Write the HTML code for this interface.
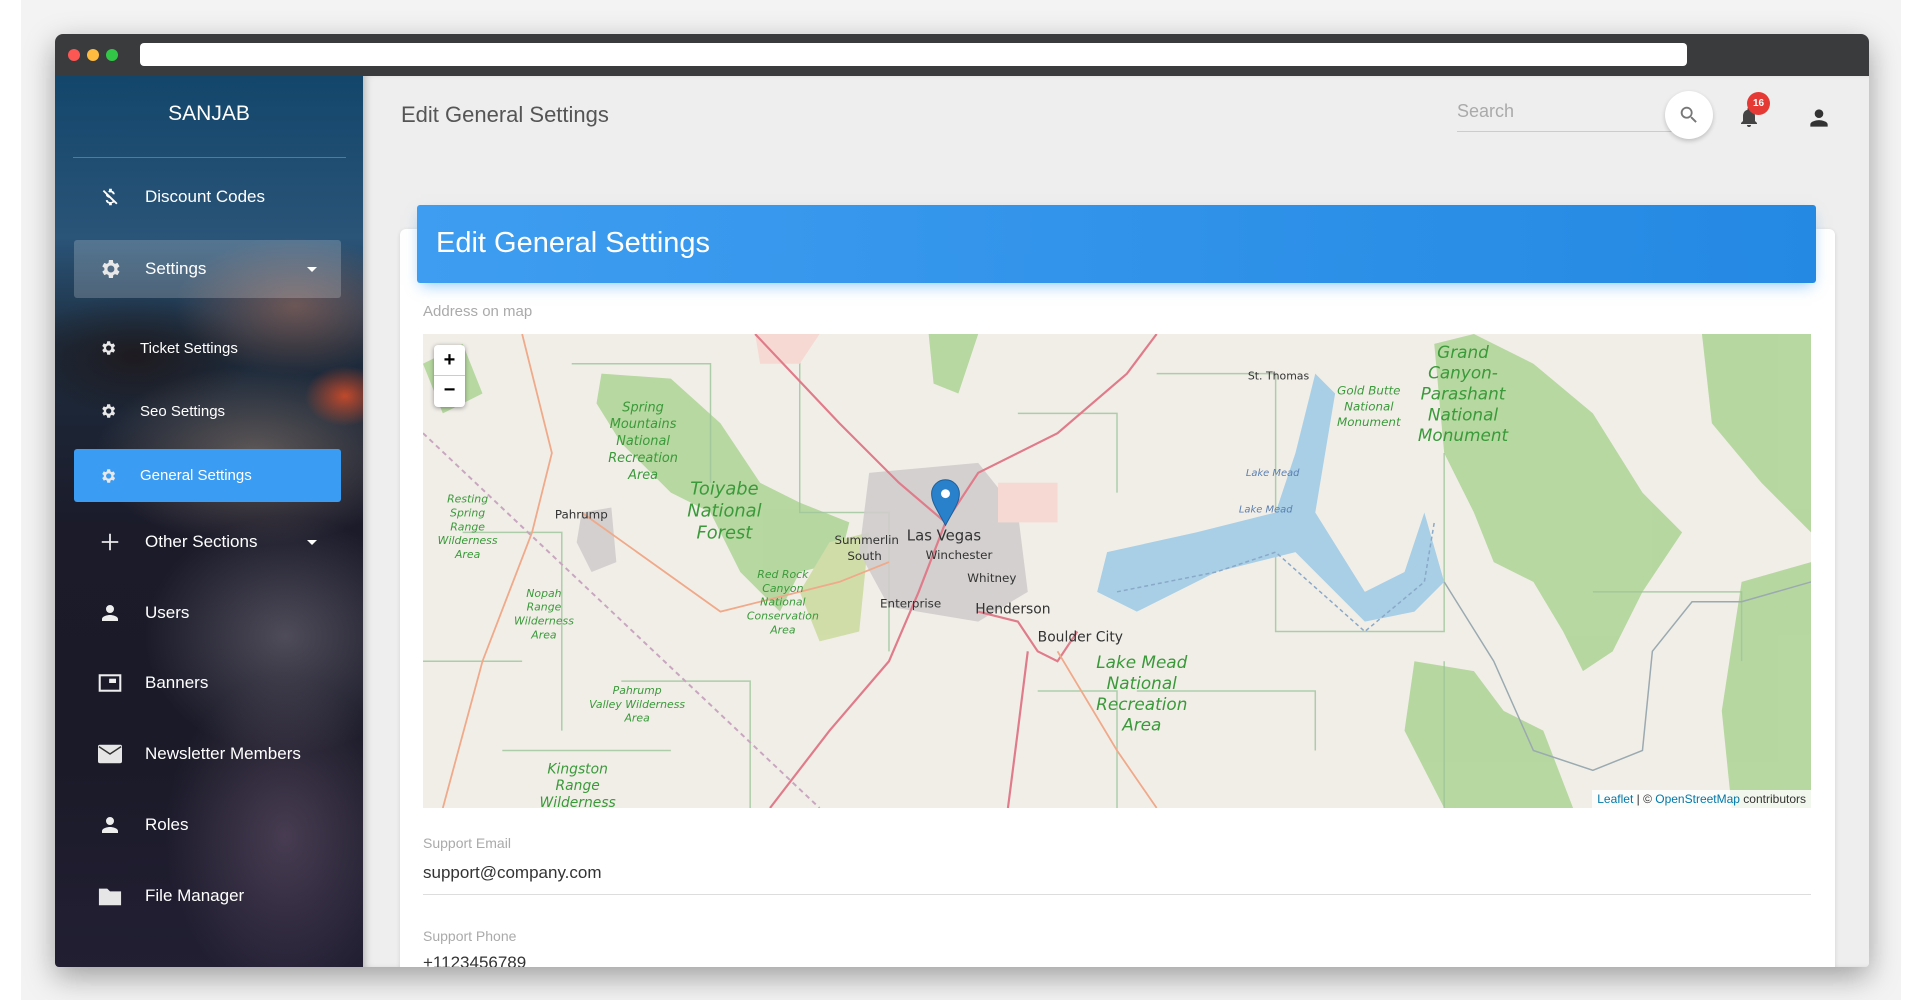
<!DOCTYPE html>
<html><head><meta charset="utf-8"><style>
*{margin:0;padding:0;box-sizing:border-box}
html,body{width:1920px;height:1000px;overflow:hidden}
body{background:#fff;font-family:"Liberation Sans",sans-serif;position:relative}
.bgpanel{position:absolute;left:21px;top:0;width:1880px;height:1000px;background:#f3f3f3}
.win{position:absolute;left:55px;top:34px;width:1814px;height:933px;border-radius:8px 8px 4px 4px;overflow:hidden;box-shadow:0 10px 30px rgba(0,0,0,.35);background:#eee}
.bar{position:absolute;left:0;top:0;width:100%;height:42px;background:#3a3b3d}
.dot{position:absolute;top:15px;width:12px;height:12px;border-radius:50%}
.url{position:absolute;left:85px;top:9px;width:1547px;height:23px;background:#fff;border-radius:4px}
.side{position:absolute;left:0;top:42px;width:308px;height:900px;overflow:hidden;
background:
radial-gradient(ellipse 40px 30px at 290px 320px,rgba(230,80,40,.8),transparent),
radial-gradient(ellipse 120px 70px at 240px 230px,rgba(200,120,90,.45),transparent),
radial-gradient(ellipse 160px 90px at 200px 380px,rgba(220,190,160,.35),transparent),
radial-gradient(ellipse 140px 120px at 230px 560px,rgba(200,190,200,.3),transparent),
radial-gradient(ellipse 120px 160px at 230px 760px,rgba(150,120,150,.35),transparent),
radial-gradient(ellipse 120px 60px at 80px 280px,rgba(30,20,20,.7),transparent),
linear-gradient(180deg,#13466b 0%,#2a5478 18%,#1d2c3d 30%,#1b1b2a 50%,#1a1a28 75%,#221f33 100%)}
.side .logo{position:absolute;left:0;width:308px;top:26px;text-align:center;color:#fff;font-size:21px}
.side .hr{position:absolute;left:18px;top:81px;width:273px;height:1px;background:rgba(255,255,255,.25)}
.item{position:absolute;left:19px;width:267px;height:50px;color:#fff;font-size:17px;display:flex;align-items:center}
.item .ic{position:absolute;left:24px;width:24px;height:24px;display:flex;align-items:center;justify-content:center}
.item .tx{position:absolute;left:71px}
.item.sub{font-size:15px}
.item.sub .ic{left:24px;width:20px}
.item.sub .tx{left:66px}
.caret{position:absolute;right:24px;width:0;height:0;border-left:5px solid transparent;border-right:5px solid transparent;border-top:5px solid #fff}
.main{position:absolute;left:308px;top:42px;right:0;bottom:0;background:#eee;box-shadow:inset 6px 0 8px -4px rgba(0,0,0,.25)}
.ptitle{position:absolute;left:38px;top:26px;font-size:22px;color:#555}
.search{position:absolute;left:1094px;top:18px;width:223px;height:38px;border-bottom:1px solid #ccc;color:#aaa;font-size:18px;padding-top:7px}
.sbtn{position:absolute;left:1302px;top:15px;width:48px;height:48px;border-radius:50%;background:#fff;box-shadow:0 2px 5px rgba(0,0,0,.2)}
.card{position:absolute;left:37px;top:153px;width:1435px;height:800px;background:#fff;border-radius:6px;box-shadow:0 1px 4px rgba(0,0,0,.12)}
.head{position:absolute;left:54px;top:129px;width:1399px;height:78px;background:linear-gradient(90deg,#3e9df0,#2489e3);border-radius:3px;box-shadow:0 6px 14px -4px rgba(33,150,243,.5);color:#fff;font-size:29px;padding:22px 0 0 19px}
.lbl{position:absolute;left:60px;color:#aaa;font-size:15px}
.val{position:absolute;left:60px;color:#333;font-size:17px}
.line{position:absolute;left:60px;width:1388px;height:1px;background:#ddd}
.map{position:absolute;left:60px;top:258px;width:1388px;height:474px;overflow:hidden;background:#f1eee8}
.map text{font-family:"DejaVu Sans",sans-serif}
.zoomc{position:absolute;left:11px;top:11px;width:31px;height:62px;background:#fff;border-radius:4px;box-shadow:0 1px 5px rgba(0,0,0,.4);font-size:20px;font-weight:bold;text-align:center;color:#000}
.attr{position:absolute;right:0;bottom:0;background:rgba(255,255,255,.8);font-size:12px;color:#333;padding:2px 5px}
.attr span{color:#0078a8}
</style></head><body>
<div class="bgpanel"></div>
<div class="win">
<div class="bar"><div class="dot" style="left:13px;background:#fc5753"></div><div class="dot" style="left:32px;background:#fdbc40"></div><div class="dot" style="left:51px;background:#33c748"></div><div class="url"></div></div>
<div class="side">
<div class="logo">SANJAB</div><div class="hr"></div>
<div class="item" style="top:96px"><div class="ic"><svg width="22" height="24" viewBox="0 0 24 24" fill="#fff"><path d="M12.5 6.9c1.8 0 2.4.9 2.5 2.1h2.2c-.1-1.7-1.1-3.3-3.2-3.8V3h-3v2.2c-.4.1-.8.2-1.1.4l1.5 1.5c.3-.1.7-.2 1.1-.2zM5.5 4.3L4.1 5.7 7.5 9.1c0 2.1 1.6 3.2 3.9 3.9l3.5 3.5c-.3.5-1.1 1-2.4 1-2 0-2.8-.9-2.9-2.1H7.4c.1 2.2 1.8 3.4 3.6 3.8V21h3v-2.2c1-.2 1.8-.5 2.5-1l2.3 2.3 1.4-1.4z"/></svg></div><div class="tx">Discount Codes</div></div>
<div class="item" style="top:164px;height:58px;background:rgba(255,255,255,.2);border-radius:3px"><div class="ic"><svg width="26" height="26" viewBox="0 0 24 24" fill="#e8e8e8"><path d="M19.4 13a7.5 7.5 0 000-2l2.1-1.6-2-3.5-2.5 1a7.3 7.3 0 00-1.7-1L14.9 3h-4l-.4 2.9c-.6.3-1.2.6-1.7 1l-2.5-1-2 3.5L6.4 11a7.5 7.5 0 000 2l-2.1 1.6 2 3.5 2.5-1c.5.4 1.1.7 1.7 1l.4 2.9h4l.4-2.9c.6-.3 1.2-.6 1.7-1l2.5 1 2-3.5zM12.9 15.5a3.5 3.5 0 110-7 3.5 3.5 0 010 7z"/></svg></div><div class="tx">Settings</div><div class="caret"></div></div>
<div class="item sub" style="top:247px"><div class="ic"><svg width="18" height="18" viewBox="0 0 24 24" fill="#e8e8e8"><path d="M19.4 13a7.5 7.5 0 000-2l2.1-1.6-2-3.5-2.5 1a7.3 7.3 0 00-1.7-1L14.9 3h-4l-.4 2.9c-.6.3-1.2.6-1.7 1l-2.5-1-2 3.5L6.4 11a7.5 7.5 0 000 2l-2.1 1.6 2 3.5 2.5-1c.5.4 1.1.7 1.7 1l.4 2.9h4l.4-2.9c.6-.3 1.2-.6 1.7-1l2.5 1 2-3.5zM12.9 15.5a3.5 3.5 0 110-7 3.5 3.5 0 010 7z"/></svg></div><div class="tx">Ticket Settings</div></div>
<div class="item sub" style="top:310px"><div class="ic"><svg width="18" height="18" viewBox="0 0 24 24" fill="#e8e8e8"><path d="M19.4 13a7.5 7.5 0 000-2l2.1-1.6-2-3.5-2.5 1a7.3 7.3 0 00-1.7-1L14.9 3h-4l-.4 2.9c-.6.3-1.2.6-1.7 1l-2.5-1-2 3.5L6.4 11a7.5 7.5 0 000 2l-2.1 1.6 2 3.5 2.5-1c.5.4 1.1.7 1.7 1l.4 2.9h4l.4-2.9c.6-.3 1.2-.6 1.7-1l2.5 1 2-3.5zM12.9 15.5a3.5 3.5 0 110-7 3.5 3.5 0 010 7z"/></svg></div><div class="tx">Seo Settings</div></div>
<div class="item sub" style="top:373px;height:53px;background:#3a9cf2;border-radius:3px"><div class="ic"><svg width="18" height="18" viewBox="0 0 24 24" fill="#e8e8e8"><path d="M19.4 13a7.5 7.5 0 000-2l2.1-1.6-2-3.5-2.5 1a7.3 7.3 0 00-1.7-1L14.9 3h-4l-.4 2.9c-.6.3-1.2.6-1.7 1l-2.5-1-2 3.5L6.4 11a7.5 7.5 0 000 2l-2.1 1.6 2 3.5 2.5-1c.5.4 1.1.7 1.7 1l.4 2.9h4l.4-2.9c.6-.3 1.2-.6 1.7-1l2.5 1 2-3.5zM12.9 15.5a3.5 3.5 0 110-7 3.5 3.5 0 010 7z"/></svg></div><div class="tx">General Settings</div></div>
<div class="item" style="top:441px"><div class="ic"><svg width="22" height="22" viewBox="0 0 24 24" fill="#e8e8e8"><path d="M11 3h2v8h8v2h-8v8h-2v-8H3v-2h8z"/></svg></div><div class="tx">Other Sections</div><div class="caret"></div></div>
<div class="item" style="top:512px"><div class="ic"><svg width="24" height="24" viewBox="0 0 24 24" fill="#eee"><path d="M12 12a4 4 0 100-8 4 4 0 000 8zm0 2c-2.7 0-8 1.3-8 4v2h16v-2c0-2.7-5.3-4-8-4z"/></svg></div><div class="tx">Users</div></div>
<div class="item" style="top:582px"><div class="ic"><svg width="28" height="24" viewBox="0 0 28 24" fill="none" stroke="#eee" stroke-width="2.4"><rect x="2" y="3" width="24" height="18"/><rect x="13" y="7" width="8" height="5" fill="#eee" stroke="none"/></svg></div><div class="tx">Banners</div></div>
<div class="item" style="top:653px"><div class="ic"><svg width="26" height="22" viewBox="0 0 26 22"><rect x="0" y="1" width="26" height="20" rx="2" fill="#e6e6e6"/><path d="M1 3l12 8 12-8" fill="none" stroke="#333" stroke-width="1.5"/></svg></div><div class="tx">Newsletter Members</div></div>
<div class="item" style="top:724px"><div class="ic"><svg width="24" height="24" viewBox="0 0 24 24" fill="#eee"><path d="M12 12a4 4 0 100-8 4 4 0 000 8zm0 2c-2.7 0-8 1.3-8 4v2h16v-2c0-2.7-5.3-4-8-4z"/></svg></div><div class="tx">Roles</div></div>
<div class="item" style="top:795px"><div class="ic"><svg width="26" height="22" viewBox="0 0 26 22" fill="#e6e6e6"><path d="M1 3h9l3 3h12v15H1z"/></svg></div><div class="tx">File Manager</div></div>
</div>
<div class="main">
<div class="ptitle">Edit General Settings</div>
<div class="search">Search</div>
<div class="sbtn"><svg style="position:absolute;left:13px;top:13px" width="22" height="22" viewBox="0 0 24 24" fill="#777"><path d="M15.5 14h-.8l-.3-.3A6.5 6.5 0 109.5 16a6.5 6.5 0 004.2-1.6l.3.3v.8l5 5 1.5-1.5zm-6 0a4.5 4.5 0 110-9 4.5 4.5 0 010 9z"/></svg></div>
<svg style="position:absolute;left:1374px;top:29px" width="24" height="24" viewBox="0 0 24 24" fill="#444"><path d="M12 22a2 2 0 002-2h-4a2 2 0 002 2zm6-6v-5c0-3.1-1.6-5.6-4.5-6.3V4a1.5 1.5 0 00-3 0v.7C7.6 5.4 6 7.9 6 11v5l-2 2v1h16v-1z"/></svg>
<div style="position:absolute;left:1384px;top:16px;width:23px;height:23px;border-radius:50%;background:#e53935;color:#fff;font-size:10px;font-weight:bold;text-align:center;line-height:23px">16</div>
<svg style="position:absolute;left:1443px;top:29px" width="26" height="26" viewBox="0 0 24 24" fill="#333"><path d="M12 12a4 4 0 100-8 4 4 0 000 8zm0 2c-2.7 0-8 1.3-8 4v2h16v-2c0-2.7-5.3-4-8-4z"/></svg>
<div class="card"></div>
<div class="head">Edit General Settings</div>
<div class="lbl" style="top:227px">Address on map</div>
<div class="map">
<svg width="1388" height="474" viewBox="0 0 1400 478" preserveAspectRatio="none">
<g fill="#a9d28f" opacity=".8">
<path d="M180 40 L250 45 L300 90 L340 150 L380 170 L430 190 L420 230 L380 240 L360 280 L320 240 L290 180 L250 160 L200 110 L175 70Z"/>
<path d="M1020 10 L1060 0 L1120 30 L1180 80 L1230 160 L1270 200 L1230 260 L1200 320 L1170 340 L1150 300 L1120 250 L1080 230 L1060 180 L1030 120Z"/>
<path d="M1290 0 L1400 0 L1400 200 L1350 150 L1300 90Z"/>
<path d="M1330 250 L1400 230 L1400 478 L1320 478 L1310 380Z"/>
<path d="M1000 330 L1060 340 L1090 380 L1130 400 L1160 478 L1030 478 L990 400Z"/>
<path d="M0 30 L40 10 L60 60 L20 80Z"/>
<path d="M510 0 L560 0 L540 60 L515 50Z"/>
<path d="M410 210 L450 200 L440 300 L400 310 L380 260Z" fill="#c9d99a"/>
</g>
<g fill="none" stroke="#9cc49a" stroke-width="1.5" opacity=".8">
<path d="M150 30 H290 V150 M380 0 V180 H470 V320 M600 80 H700 V160 M740 40 H860 V200 M40 200 H140 V400 M0 330 H100 M200 350 H330 V478 M860 200 V300 H1030 V120 M720 360 H900 V420 M1180 260 H1330 V330 M1030 330 V478 M620 360 H700 V478 M80 420 H250"/>
</g>
<g fill="#a8cfe6">
<path d="M690 220 L780 200 L860 180 L880 120 L900 40 L920 60 L900 180 L950 260 L990 240 L1010 180 L1030 250 L1000 280 L950 290 L880 220 L800 240 L720 280 L680 260Z"/>
</g>
<g fill="#cfcccc" opacity=".9">
<path d="M450 140 L560 130 L600 180 L610 260 L560 290 L470 275 L440 220Z"/>
<path d="M160 180 L190 175 L195 230 L170 240 L155 210Z"/>
</g>
<g fill="#f7d9d3"><rect x="580" y="150" width="60" height="40"/><path d="M335 0 H400 L380 30 H340Z"/></g>
<g fill="none" stroke="#e07b8a" stroke-width="2.2">
<path d="M335 0 L420 90 L480 150 L527 190 L560 140 L640 100 L710 40 L740 0"/>
<path d="M527 190 L500 260 L470 330 L410 400 L350 478"/>
<path d="M560 280 L600 290 L620 320 L640 330 L660 300"/>
<path d="M610 320 L600 400 L590 478"/>
</g>
<g fill="none" stroke="#f0a989" stroke-width="1.8">
<path d="M100 0 L130 120 L110 200 L60 330 L20 478"/>
<path d="M160 180 L300 280 L420 250 L470 230"/>
<path d="M640 320 L700 420 L740 478"/>
</g>
<path d="M0 100 L400 478" stroke="#c9a6c0" stroke-width="2" stroke-dasharray="5 4" fill="none"/>
<path d="M700 260 L800 240 L860 220 L950 300 L1010 250 L1020 190" stroke="#8aa8c8" stroke-width="1.5" stroke-dasharray="4 3" fill="none"/>
<path d="M1030 250 L1080 330 L1120 420 L1180 440 L1230 420 L1240 320 L1280 270 L1330 270 L1400 250" stroke="#9aaab0" stroke-width="1.5" fill="none"/>
<g font-style="italic" fill="#3a9a3a" text-anchor="middle">
<text font-size="13"><tspan x="222" y="78">Spring</tspan><tspan x="222" y="95">Mountains</tspan><tspan x="222" y="112">National</tspan><tspan x="222" y="129">Recreation</tspan><tspan x="222" y="146">Area</tspan></text>
<text font-size="18"><tspan x="304" y="162">Toiyabe</tspan><tspan x="304" y="184">National</tspan><tspan x="304" y="206">Forest</tspan></text>
<text font-size="11"><tspan x="45" y="170">Resting</tspan><tspan x="45" y="184">Spring</tspan><tspan x="45" y="198">Range</tspan><tspan x="45" y="212">Wilderness</tspan><tspan x="45" y="226">Area</tspan></text>
<text font-size="11"><tspan x="122" y="265">Nopah</tspan><tspan x="122" y="279">Range</tspan><tspan x="122" y="293">Wilderness</tspan><tspan x="122" y="307">Area</tspan></text>
<text font-size="11"><tspan x="363" y="246">Red Rock</tspan><tspan x="363" y="260">Canyon</tspan><tspan x="363" y="274">National</tspan><tspan x="363" y="288">Conservation</tspan><tspan x="363" y="302">Area</tspan></text>
<text font-size="11"><tspan x="216" y="363">Pahrump</tspan><tspan x="216" y="377">Valley Wilderness</tspan><tspan x="216" y="391">Area</tspan></text>
<text font-size="14"><tspan x="156" y="443">Kingston</tspan><tspan x="156" y="460">Range</tspan><tspan x="156" y="477">Wilderness</tspan></text>
<text font-size="17"><tspan x="725" y="337">Lake Mead</tspan><tspan x="725" y="358">National</tspan><tspan x="725" y="379">Recreation</tspan><tspan x="725" y="400">Area</tspan></text>
<text font-size="12"><tspan x="954" y="61">Gold Butte</tspan><tspan x="954" y="77">National</tspan><tspan x="954" y="93">Monument</tspan></text>
<text font-size="17"><tspan x="1049" y="24">Grand</tspan><tspan x="1049" y="45">Canyon-</tspan><tspan x="1049" y="66">Parashant</tspan><tspan x="1049" y="87">National</tspan><tspan x="1049" y="108">Monument</tspan></text>
<text font-size="10" fill="#5b7fb0"><tspan x="857" y="143">Lake Mead</tspan><tspan x="850" y="180">Lake Mead</tspan></text>
</g>
<g fill="#333" font-size="12">
<text x="133" y="186">Pahrump</text>
<text x="415" y="212">Summerlin</text><text x="428" y="228">South</text>
<text x="488" y="208" font-size="15">Las Vegas</text>
<text x="507" y="227">Winchester</text>
<text x="549" y="250">Whitney</text>
<text x="461" y="276">Enterprise</text>
<text x="557" y="282" font-size="14">Henderson</text>
<text x="620" y="310" font-size="14">Boulder City</text>
<text x="832" y="46" font-size="11">St. Thomas</text>
</g>
<path d="M527 193 C518 176 513 170 513 161 a14 14 0 0128 0 C541 170 536 176 527 193Z" fill="#2a81cb" stroke="#1d5f9a" stroke-width="1"/>
<circle cx="527" cy="161" r="4.5" fill="#fff"/>
</svg>
<div class="zoomc"><div style="height:31px;line-height:30px;border-bottom:1px solid #ccc">+</div><div style="line-height:28px">−</div></div>
<div class="attr"><span>Leaflet</span> | © <span>OpenStreetMap</span> contributors</div>
</div>
<div class="lbl" style="top:759px;font-size:14px">Support Email</div>
<div class="val" style="top:787px">support@company.com</div>
<div class="line" style="top:818px"></div>
<div class="lbl" style="top:852px;font-size:14px">Support Phone</div>
<div class="val" style="top:877px">+1123456789</div>
</div>
</div>
</body></html>
